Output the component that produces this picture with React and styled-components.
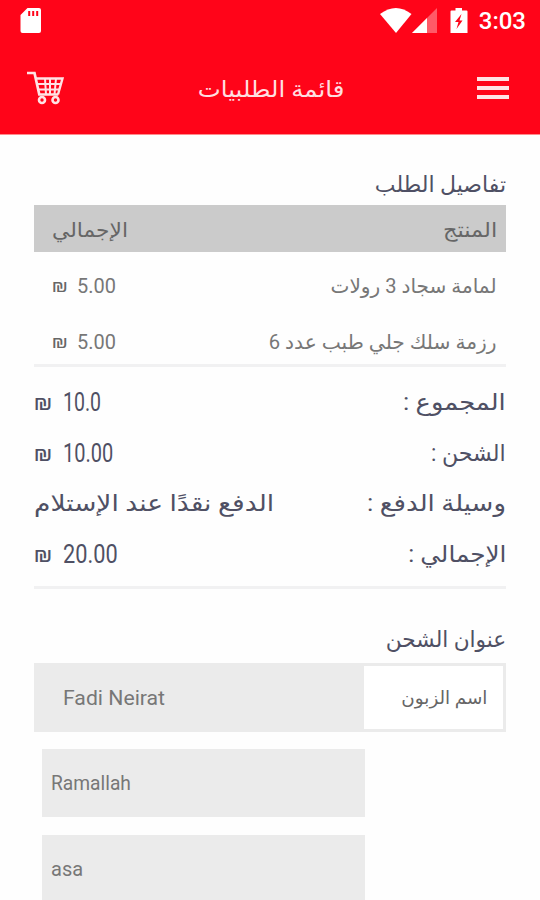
import React from 'react';
import styled, { createGlobalStyle, css } from 'styled-components';

const GlobalStyle = createGlobalStyle`
    * {
        box-sizing: border-box;
    }
    body {
        margin: 0;
        background: #fefefe;
        overflow: hidden;
        font-family: Roboto, "DejaVu Sans", sans-serif;
    }
`;

const Screen = styled.div`
    width: 540px;
    height: 900px;
    overflow: hidden;
    direction: rtl;
`;

const Header = styled.header`
    height: 135px;
    background: #ff0419;
    border-bottom: 1px solid #ff8a8c;
`;

const StatusBar = styled.div`
    height: 42px;
    padding: 0 14px 0 19px;
    display: flex;
    align-items: center;
    justify-content: space-between;
    direction: ltr;
`;

const StatusIcons = styled.div`
    display: flex;
    align-items: center;
`;

const Clock = styled.span`
    margin-left: 11px;
    color: #fff;
    font-size: 24px;
    font-weight: 500;
    line-height: 43px;
`;

const AppBar = styled.div`
    height: 92px;
    padding: 0 31px 0 27px;
    display: flex;
    align-items: center;
    justify-content: space-between;
`;

const PageTitle = styled.div`
    padding-top: 3px;
`;

const Content = styled.main`
    padding: 35px 34px 0;
`;

/* sx stretches or narrows a line from the side it is aligned to */
const Label = styled.span`
    display: inline-block;
    white-space: nowrap;
    color: ${props => props.color || '#4f5064'};
    font-size: ${props => props.size || 20}px;
    line-height: 28px;
    ${props =>
        props.sx &&
        css`
          transform: scaleX(${props.sx});
          transform-origin: ${props.from || 'right'} center;
        `}
`;

const SectionTitle = styled.div`
    height: ${props => props.height}px;
    padding-bottom: ${props => props.bottom}px;
    display: flex;
    align-items: flex-end;
`;

const TableHead = styled.div`
    height: 47px;
    padding: 2px 9px 0 18px;
    display: flex;
    align-items: center;
    justify-content: space-between;
    background: #cbcbcb;
`;

const TableBody = styled.div`
    height: 115px;
    padding-top: 6px;
    border-bottom: 3px solid #f1f1f2;
`;

const ProductRow = styled.div`
    height: 56px;
    padding: 0 9px 0 18px;
    display: flex;
    align-items: center;
    justify-content: space-between;
`;

const Totals = styled.div`
    height: 222px;
    padding-top: 11px;
    border-bottom: 3px solid #f1f1f2;
`;

const TotalRow = styled.div`
    height: 50.6px;
    display: flex;
    align-items: center;
    justify-content: space-between;
`;

const Price = styled.div`
    display: flex;
    align-items: center;
    direction: ltr;
    gap: ${props => (props.large ? 12 : 10)}px;
`;

const NameField = styled.div`
    height: 69px;
    display: flex;
    border: 3px solid #ebebeb;
    background: #ebebeb;
`;

const FieldLabel = styled.div`
    width: 139px;
    padding-right: 16px;
    display: flex;
    align-items: center;
    background: #fff;
`;

const FieldValue = styled.div`
    flex: 1;
    padding-left: 26px;
    display: flex;
    align-items: center;
    direction: ltr;
`;

const AddressBox = styled.div`
    width: 323px;
    height: 68px;
    margin: 17.3px 141px 0 0;
    padding-left: 9px;
    display: flex;
    align-items: center;
    direction: ltr;
    background: #ebebeb;
`;

const SdCard = () => (
    <svg width="24" height="28" viewBox="0 0 24 28">
        <path d="M8.500 1h11.500a2 2 0 0 1 2 2v21a2 2 0 0 1-2 2H3.500a2 2 0 0 1-2-2V8z" fill="#fff" />
        <path d="M10.200 4v5M14.200 4v5M18.200 4v5" stroke="#ff0419" strokeWidth="2" />
    </svg>
);

const Wifi = () => (
    <svg width="32" height="26" viewBox="0 0 32 26">
        <path d="M0 6Q16-6 31.500 6L16 25z" fill="#fff" />
    </svg>
);

const Signal = () => (
    <svg width="26" height="26" viewBox="0 0 26 26">
        <path d="M25 0v25H0z" fill="#ff5a68" />
        <path d="M15 10v15H0z" fill="#fff" />
    </svg>
);

const BatteryIcon = styled.svg`
    margin-left: 12px;
`;

const Battery = () => (
    <BatteryIcon width="18" height="26" viewBox="0 0 18 26">
        <path d="M5.500 0h6.500v2.500h4.500q1 0 1 1v21.500H.500v-21.500q0-1 1-1h4z" fill="#fff" />
        <path d="M11.500 6l-6.500 8h3.500l-2 7 6-8.500H9.500z" fill="#ff0419" />
    </BatteryIcon>
);

const Menu = () => (
    <svg width="32" height="24" viewBox="0 0 32 24">
        <path d="M0 3h32M0 12h32M0 21h32" stroke="#ffe3e5" strokeWidth="4" />
    </svg>
);

const Cart = () => (
    <svg width="38" height="34" viewBox="0 0 38 34" fill="none" stroke="#ffe3e5">
        <path d="M0 2h7.500l4.800 21.500h19" strokeWidth="2.700" />
        <path d="M9 7.500h26.500l-4.500 16" strokeWidth="2.400" />
        <path d="M10 13h24M11.500 18.500h21.500M18 7.500l1 16M23 7.500v16M29 7.500l-1.500 16" strokeWidth="2" />
        <circle cx="15" cy="29" r="3" strokeWidth="2.600" />
        <circle cx="28.500" cy="29" r="3" strokeWidth="2.600" />
    </svg>
);

const Shekel = ({ size, color }) => (
    <Label size={size} color={color} sx={1.06} from="left">₪</Label>
);

const products = [
    { id: 1, name: 'لمامة سجاد 3 رولات', price: '5.00', sx: 1.003 },
    { id: 2, name: 'رزمة سلك جلي طبب عدد 6', price: '5.00', sx: 1.01 },
];

const totals = [
    { id: 1, name: 'المجموع :', sx: 1.12, price: '10.0', priceSx: 0.78 },
    { id: 2, name: 'الشحن :', sx: 0.96, price: '10.00', priceSx: 0.8 },
    { id: 3, name: 'وسيلة الدفع :', sx: 1.13, text: 'الدفع نقدًا عند الإستلام' },
    { id: 4, name: 'الإجمالي :', sx: 1.075, price: '20.00', priceSx: 0.87 },
];

const App = () => {
    return (
        <Screen>
            <GlobalStyle />
            <Header>
                <StatusBar>
                    <SdCard />
                    <StatusIcons>
                        <Wifi />
                        <Signal />
                        <Battery />
                        <Clock>3:03</Clock>
                    </StatusIcons>
                </StatusBar>
                <AppBar>
                    <Menu />
                    <PageTitle>
                        <Label color="#ffdfe1" size={23} sx={1.06} from="center">قائمة الطلبيات</Label>
                    </PageTitle>
                    <Cart />
                </AppBar>
            </Header>
            <Content>
                <SectionTitle height={35} bottom={6}>
                    <Label size={22}>تفاصيل الطلب</Label>
                </SectionTitle>
                <TableHead>
                    <Label color="#666" sx={1.125}>المنتج</Label>
                    <Label color="#666" sx={1.09} from="left">الإجمالي</Label>
                </TableHead>
                <TableBody>
                    {products.map(product => (
                        <ProductRow key={product.id}>
                            <Label color="#777" sx={product.sx}>{product.name}</Label>
                            <Price>
                                <Shekel size={19} color="#666" />
                                <Label color="#777" size={21} sx={0.95} from="left">{product.price}</Label>
                            </Price>
                        </ProductRow>
                    ))}
                </TableBody>
                <Totals>
                    {totals.map(total => (
                        <TotalRow key={total.id}>
                            <Label size={23} sx={total.sx}>{total.name}</Label>
                            {total.text ? (
                                <Label size={23} sx={1.15} from="left">{total.text}</Label>
                            ) : (
                                <Price large>
                                    <Shekel size={22} />
                                    <Label size={25} sx={total.priceSx} from="left">{total.price}</Label>
                                </Price>
                            )}
                        </TotalRow>
                    ))}
                </Totals>
                <SectionTitle height={74} bottom={9}>
                    <Label size={22} sx={0.985}>عنوان الشحن</Label>
                </SectionTitle>
                <NameField>
                    <FieldLabel>
                        <Label size={18} color="#666" sx={1.02}>اسم الزبون</Label>
                    </FieldLabel>
                    <FieldValue>
                        <Label color="#777" sx={1.06} from="left">Fadi Neirat</Label>
                    </FieldValue>
                </NameField>
                <AddressBox>
                    <Label color="#777" sx={0.96} from="left">Ramallah</Label>
                </AddressBox>
                <AddressBox>
                    <Label color="#777">asa</Label>
                </AddressBox>
            </Content>
        </Screen>
    );
};

export default App;
